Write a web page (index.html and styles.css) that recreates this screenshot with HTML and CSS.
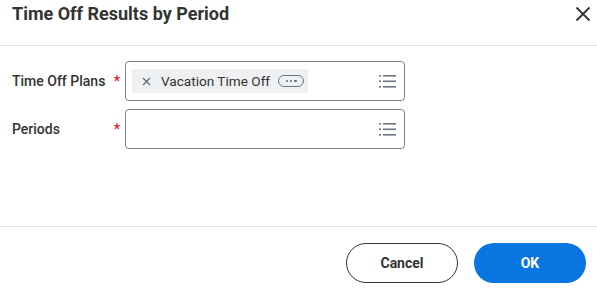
FILE: index.html
```html
<!DOCTYPE html>
<html>
<head>
<meta charset="utf-8">
<link rel="stylesheet" href="styles.css">
</head>
<body>
<div class="dialog">
  <div class="header">
    <h1 class="title">Time Off Results by Period</h1>
    <button class="close" aria-label="Close">
      <svg width="16" height="16" viewBox="0 0 16 16"><path d="M1.5 1.5 L14.5 14.5 M14.5 1.5 L1.5 14.5" stroke="#333" stroke-width="1.8" fill="none"/></svg>
    </button>
  </div>
  <div class="body">
    <div class="row">
      <label class="label">Time Off Plans <span class="req">*</span></label>
      <div class="field">
        <div class="chip">
          <svg class="chip-x" width="9" height="9" viewBox="0 0 9 9"><path d="M1 1 L8 8 M8 1 L1 8" stroke="#5e6a75" stroke-width="1.3" fill="none"/></svg>
          <span class="chip-text">Vacation Time Off</span>
          <span class="more"><i></i><i></i><i></i></span>
        </div>
        <svg class="list" width="17" height="13" viewBox="0 0 17 13"><g fill="#6b7480"><rect x="0" y="0" width="2" height="1.6"/><rect x="4" y="0" width="13" height="1.6"/><rect x="0" y="5.5" width="2" height="1.6"/><rect x="4" y="5.5" width="13" height="1.6"/><rect x="0" y="11" width="2" height="1.6"/><rect x="4" y="11" width="13" height="1.6"/></g></svg>
      </div>
    </div>
    <div class="row">
      <label class="label">Periods <span class="req">*</span></label>
      <div class="field empty">
        <svg class="list" width="17" height="13" viewBox="0 0 17 13"><g fill="#6b7480"><rect x="0" y="0" width="2" height="1.6"/><rect x="4" y="0" width="13" height="1.6"/><rect x="0" y="5.5" width="2" height="1.6"/><rect x="4" y="5.5" width="13" height="1.6"/><rect x="0" y="11" width="2" height="1.6"/><rect x="4" y="11" width="13" height="1.6"/></g></svg>
      </div>
    </div>
  </div>
  <div class="footer">
    <button class="btn cancel">Cancel</button>
    <button class="btn ok">OK</button>
  </div>
</div>
</body>
</html>
```
FILE: styles.css
```css
* { box-sizing: border-box; }
html, body { margin: 0; padding: 0; background: #fff; }
body { font-family: Roboto, "Liberation Sans", sans-serif; color: #333; }
.dialog { width: 597px; height: 292px; display: flex; flex-direction: column; }
.header { height: 46px; border-bottom: 1px solid #dfe1e3; display: flex; align-items: flex-start; justify-content: space-between; padding: 0 4px 0 12px; }
.title { margin: 0; padding-top: 2px; font-size: 18px; font-weight: 700; line-height: 24px; color: #333; }
.close { background: none; border: 0; padding: 0; margin-top: 5px; width: 20px; height: 18px; display: flex; align-items: center; justify-content: center; }
.body { padding: 15px 0 0 12px; display: flex; flex-direction: column; gap: 8px; height: 181px; border-bottom: 1px solid #dfe1e3; }
.row { display: flex; align-items: center; }
.label { width: 113px; font-size: 14px; font-weight: 500; color: #333; display: flex; justify-content: space-between; padding-right: 5px; }
.req { color: #de2e21; font-weight: 700; }
.field { width: 280px; height: 40px; border: 1px solid #7b848e; border-radius: 4px; display: flex; align-items: center; padding: 0 7px 0 6px; justify-content: space-between; }
.field.empty { justify-content: flex-end; }
.chip { height: 24px; width: 176px; background: #eef0f2; border-radius: 2px; display: flex; align-items: center; padding-left: 10px; }
.chip-x { margin-right: 10px; }
.chip-text { font-size: 13.6px; color: #333; }
.more { margin-left: 8px; width: 26px; height: 12px; border: 1px solid #6b7480; border-radius: 7px; display: flex; align-items: center; justify-content: center; gap: 2px; }
.more i { width: 2.4px; height: 2.4px; background: #5e6a75; border-radius: 50%; }
.list { margin-right: 1px; }
.footer { flex: 1; display: flex; justify-content: flex-end; align-items: flex-start; padding: 16px 11px 0 0; gap: 16px; }
.btn { width: 112px; height: 40px; border-radius: 20px; font-family: Roboto, "Liberation Sans", sans-serif; font-size: 14px; font-weight: 700; }
.cancel { background: #fff; border: 1px solid #333; color: #333; }
.ok { background: #0875e1; border: 0; color: #fff; }
```
